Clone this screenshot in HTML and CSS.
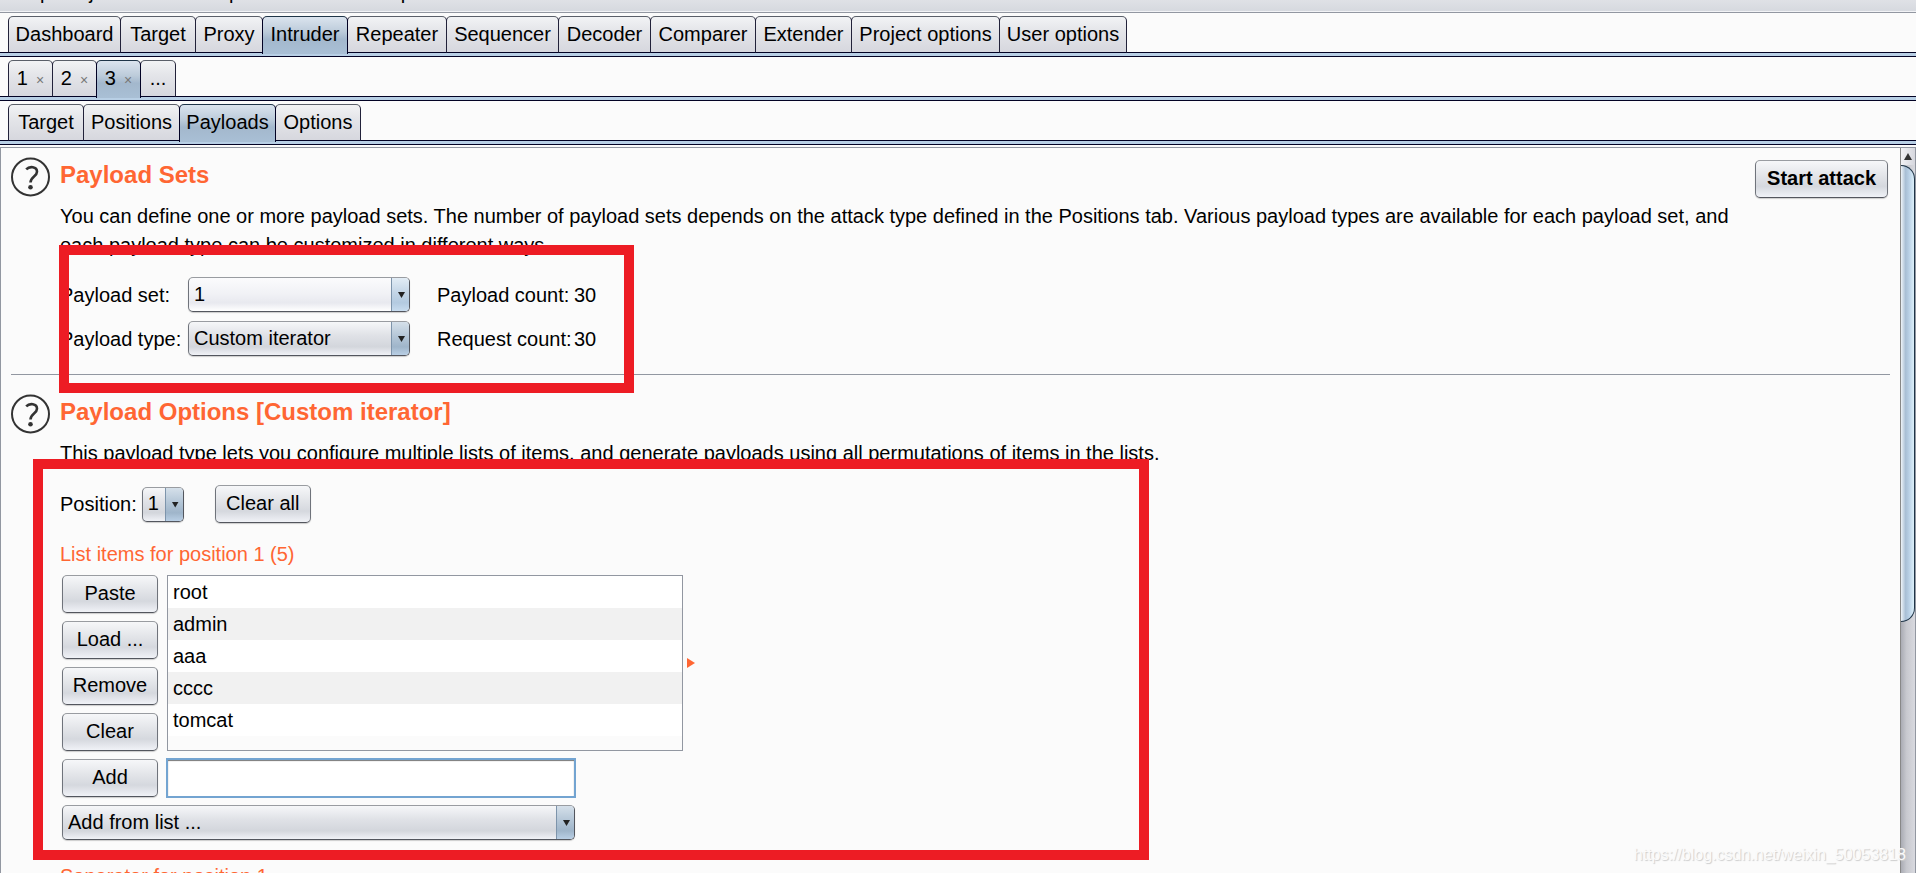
FILE: index.html
```html
<!DOCTYPE html>
<html lang="en">
<head>
<meta charset="utf-8">
<title>Intruder - Payloads</title>
<link rel="stylesheet" href="styles.css">
</head>
<body>
<div class="app">
  <header class="menubar"><span>Burp</span><span>Project</span><span>Intruder</span><span>Repeater</span><span>Window</span><span>Help</span></header>
  <nav class="tabs">
    <button class="tab w112">Dashboard</button><button class="tab w76">Target</button><button class="tab w68">Proxy</button><button class="tab w86 active">Intruder</button><button class="tab w100">Repeater</button><button class="tab w112">Sequencer</button><button class="tab w93">Decoder</button><button class="tab w106">Comparer</button><button class="tab w97">Extender</button><button class="tab w149">Project options</button><button class="tab w128">User options</button>
  </nav>
  <nav class="tabs">
    <button class="tab w45">1<span class="close">×</span></button><button class="tab w45">2<span class="close">×</span></button><button class="tab w45 active">3<span class="close">×</span></button><button class="tab w36">...</button>
  </nav>
  <nav class="tabs">
    <button class="tab w76">Target</button><button class="tab w97">Positions</button><button class="tab w97 active">Payloads</button><button class="tab w86">Options</button>
  </nav>
  <main class="pane">
    <div class="content">
      <section class="section">
        <svg class="help" viewBox="0 0 40 40"><circle cx="19.500" cy="20" r="18.500" fill="none" stroke="#333" stroke-width="2"/><path d="M15.200 12.300C18.500 8.900 26 9.300 26 14.700C26 19.500 19.500 19.500 19.500 25.500" fill="none" stroke="#333" stroke-width="2.600"/><circle cx="19.500" cy="30.300" r="2.300" fill="#333"/></svg>
        <div class="body">
          <div class="head">
            <h2>Payload Sets</h2>
            <button class="btn start">Start attack</button>
          </div>
          <p class="desc">You can define one or more payload sets. The number of payload sets depends on the attack type defined in the Positions tab. Various payload types are available for each payload set, and each payload type can be customized in different ways.</p>
          <div class="form">
            <label for="set">Payload set:</label>
            <div class="combo light"><select id="set"><option>1</option></select></div>
            <span>Payload count:</span><span>30</span>
            <label for="type">Payload type:</label>
            <div class="combo"><select id="type"><option>Custom iterator</option></select></div>
            <span>Request count:</span><span>30</span>
          </div>
        </div>
      </section>
      <hr class="rule">
      <section class="section">
        <svg class="help" viewBox="0 0 40 40"><circle cx="19.500" cy="20" r="18.500" fill="none" stroke="#333" stroke-width="2"/><path d="M15.200 12.300C18.500 8.900 26 9.300 26 14.700C26 19.500 19.500 19.500 19.500 25.500" fill="none" stroke="#333" stroke-width="2.600"/><circle cx="19.500" cy="30.300" r="2.300" fill="#333"/></svg>
        <div class="body">
          <div class="head"><h2>Payload Options [Custom iterator]</h2></div>
          <p class="desc">This payload type lets you configure multiple lists of items, and generate payloads using all permutations of items in the lists.</p>
          <div class="position">
            <label for="pos">Position:</label>
            <div class="combo small"><select id="pos"><option>1</option></select></div>
            <button class="btn fixed">Clear all</button>
          </div>
          <h3>List items for position 1 (5)</h3>
          <div class="editor">
            <div class="actions">
              <button class="btn fixed">Paste</button>
              <button class="btn fixed">Load ...</button>
              <button class="btn fixed">Remove</button>
              <button class="btn fixed">Clear</button>
            </div>
            <ul class="list"><li>root</li><li>admin</li><li>aaa</li><li>cccc</li><li>tomcat</li></ul>
            <svg class="marker" viewBox="0 0 8 10"><path d="M0 0L8 5L0 10Z" fill="#ff6633"/></svg>
          </div>
          <div class="addrow">
            <button class="btn fixed">Add</button>
            <input type="text" aria-label="New item">
          </div>
          <div class="combo wide"><select aria-label="Add from list"><option>Add from list ...</option></select></div>
          <h3>Separator for position 1</h3>
        </div>
      </section>
    </div>
    <div class="scrollbar">
      <button class="up" aria-label="Scroll up"></button>
      <div class="thumb"></div>
    </div>
  </main>
  <div class="mark mark-sets"></div>
  <div class="mark mark-options"></div>
  <div class="watermark">https://blog.csdn.net/weixin_50053818</div>
</div>
</body>
</html>
```
FILE: styles.css
```css
* { box-sizing: border-box; }
body, button, select, input { font: 20px/24px "Liberation Sans", Arial, sans-serif; color: #000; }
body { margin: 0; background: #fbfbfb; overflow: hidden; }
button, select, input { margin: 0; }
.app { position: relative; display: flex; flex-direction: column; height: 100vh; overflow: hidden; }

.menubar { display: flex; align-items: flex-end; gap: 7px; flex: none; height: 13px; padding: 0 9px 9px; background: linear-gradient(#dfe1e6, #d6d9df 11px, #f2f3f6 11px, #f2f3f6 12px, #9297a1 12px); }

.tabs { display: flex; flex: none; height: 44px; padding: 3px 8px 0; background: linear-gradient(#020224, #020224) 0 39px / 100% 1px no-repeat, linear-gradient(#b8cfe5, #b8cfe5) 0 40px / 100% 3px no-repeat, linear-gradient(#020224, #020224) 0 43px / 100% 1px no-repeat; }
.tab { flex: none; height: 37px; margin-right: -1px; padding: 0 0 2px; border: 1px solid; border-color: #5a5f69 #22223a #020224; border-radius: 5px 5px 0 0; background: linear-gradient(#f2f3f5, #e4e5e9 40%, #d6d7de); white-space: nowrap; }
.tab.active { position: relative; height: 38px; padding-bottom: 4px; border-color: #1f3548 #020224 transparent; border-bottom: 0; background: linear-gradient(#dbe4ee, #bccbda 40%, #a3b8cd 60%, #a9bfd5); }
.w36 { width: 36px; }
.w45 { width: 45px; }
.w68 { width: 68px; }
.w76 { width: 76px; }
.w86 { width: 86px; }
.w93 { width: 93px; }
.w97 { width: 97px; }
.w100 { width: 100px; }
.w106 { width: 106px; }
.w112 { width: 113px; }
.w128 { width: 128px; }
.w149 { width: 149px; }
.close { margin-left: 8px; color: #777; font-size: 14px; line-height: 20px; }

.pane { display: flex; flex: 1; min-height: 0; margin-top: 2px; border-top: 1px solid #9297a1; border-left: 1px solid #9297a1; overflow: hidden; }
.content { flex: 1; min-width: 0; padding: 9px 10px 0; overflow: hidden; }
.section { display: flex; gap: 9px; }
.help { flex: none; width: 40px; height: 40px; }
.body { flex: 1; min-width: 0; }
.head { display: flex; justify-content: space-between; height: 45px; padding-top: 3px; }
h2 { margin: 1px 0 0; font-size: 24px; line-height: 28px; color: #ff6633; }
h3 { margin: 0; font-size: 20px; font-weight: 400; line-height: 24px; color: #ff6633; }
.desc { max-width: 1680px; margin: 0; line-height: 29px; }

.btn { height: 38px; padding: 0 11px 2px; border: 1px solid; border-color: #999ca1 #6f737b #53565e; border-radius: 5px; background: linear-gradient(#f6f7f9, #e3e5e9 40%, #d5d8de 70%, #f0f2f7); box-shadow: 0 1px 1px #ccc; }
.btn.fixed { flex: none; width: 96px; padding: 0 0 2px; }
.start { margin-right: 2px; font-weight: 700; }

.form { display: grid; grid-template-columns: 128px 249px 137px auto; row-gap: 9px; align-items: center; margin-top: 17px; white-space: nowrap; }
.combo { position: relative; height: 35px; width: 222px; }
.combo select { display: block; appearance: none; width: 100%; height: 100%; padding: 0 24px 2px 5px; border: 1px solid; border-color: #999ca1 #53565e #53565e #6f737b; border-radius: 5px; background: linear-gradient(#f6f7f9, #e0e2e7 40%, #d3d6dc 75%, #f0f2f7); box-shadow: 0 1px 1px #ccc; }
.combo.light select { background: linear-gradient(#fbfbfd, #f0f1f5 50%, #e8e9ef 75%, #fff); }
.combo::before { content: ""; position: absolute; top: 1px; right: 1px; bottom: 1px; width: 17px; border-left: 1px solid #7d94ab; border-radius: 0 4px 4px 0; background: linear-gradient(#d5e0ea, #b3c5d6 45%, #9fb5ca 75%, #b9cfe5); pointer-events: none; }
.combo.light::before { background: linear-gradient(#e2ecf5, #c3d5e6 45%, #b3cae0 75%, #c8dcef); }
.combo::after { content: ""; position: absolute; top: 15px; right: 5px; width: 7px; height: 6px; background: #222; clip-path: polygon(0 0, 100% 0, 50% 100%); pointer-events: none; }
.combo.small { width: 42px; margin: 0 31px 0 5px; }
.combo.wide { width: 513px; margin: 8px 0 24px 2px; }

.rule { height: 1px; margin: 18px 0 19px; border: 0; background: #9297a1; }
.position { display: flex; align-items: center; height: 38px; margin: 17px 0 19px; }
.editor { display: flex; margin: 9px 0 8px 2px; }
.actions { display: flex; flex-direction: column; gap: 8px; margin-right: 9px; }
.list { width: 516px; margin: 0; padding: 0; border: 1px solid #9297a1; list-style: none; }
.list li { height: 32px; padding-left: 5px; line-height: 32px; background: #fff; }
.list li:nth-child(even) { background: #f1f1f1; }
.marker { align-self: center; width: 8px; height: 10px; margin-left: 4px; }
.addrow { display: flex; align-items: center; height: 38px; margin-left: 2px; }
.addrow input { width: 410px; height: 40px; margin-left: 8px; padding: 0 6px; border: 2px solid #73a4d1; background: #fff; outline: 0; box-shadow: inset 0 1px 1px #777; }

.scrollbar { flex: none; width: 16px; border-left: 1px solid #888; border-right: 1px solid #9297a1; background: linear-gradient(90deg, #aaacb4, #c8c9cf 40%, #d8d9df); }
.up { position: relative; display: block; width: 100%; height: 17px; padding: 0; border: 0; background: linear-gradient(90deg, #f2f2f5, #d6d7de); }
.up::after { content: ""; position: absolute; top: 5px; left: 3px; width: 8px; height: 7px; background: #333; clip-path: polygon(50% 0, 100% 100%, 0 100%); }
.thumb { height: 457px; border: 1px solid #1f3548; border-left: 0; border-radius: 0 14px 14px 0; background: linear-gradient(90deg, #eef3f8, #a9bfd5 35%, #b8cfe5 60%, #dcf0fa); }

.mark { position: absolute; border: 10px solid #ed1c24; pointer-events: none; }
.mark-sets { left: 59px; top: 245px; width: 575px; height: 148px; }
.mark-options { left: 33px; top: 459px; width: 1116px; height: 401px; }
.watermark { position: absolute; right: 10px; bottom: 8px; font-size: 16px; line-height: 20px; color: #fbfbfb; text-shadow: 1px 1px 1px #ccc; }
```
